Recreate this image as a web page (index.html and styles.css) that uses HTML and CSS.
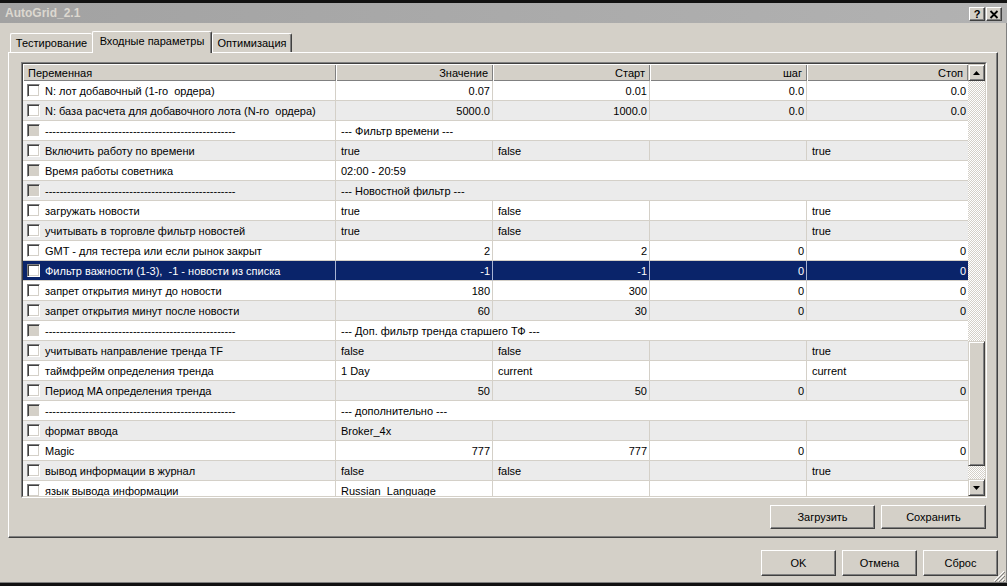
FILE: index.html
```html
<!DOCTYPE html>
<html lang="ru">
<head>
    <meta charset="UTF-8">
    <title>AutoGrid_2.1</title>
    <link rel="stylesheet" href="styles.css">
</head>
<body>

<div class="window">
    <div class="titlebar">
        <span class="title">AutoGrid_2.1</span>
        <div class="title-buttons">
            <span class="tbtn help">?</span>
            <span class="tbtn">
                <svg width="10" height="9" viewBox="0 0 10 9"><path d="M1.5 1 L8.5 8 M8.5 1 L1.5 8" stroke="#000" stroke-width="1.8"/></svg>
            </span>
        </div>
    </div>

    <div class="content">
        <div class="tabs">
            <div class="tab t1">Тестирование</div>
            <div class="tab t2 active">Входные параметры</div>
            <div class="tab t3">Оптимизация</div>
        </div>

        <div class="panel">
            <div class="grid">
                <div class="grid-inner">
                    <div class="grid-body">
                        <table>
                            <colgroup>
                                <col class="c-name"><col class="c-val"><col class="c-val"><col class="c-val"><col class="c-last">
                            </colgroup>
                            <thead>
                                <tr><th class="left">Переменная</th><th>Значение</th><th>Старт</th><th>шаг</th><th>Стоп</th></tr>
                            </thead>
                            <tbody>
                                <tr><td><span class="cb"></span>N: лот добавочный (1-го  ордера)</td><td class="num">0.07</td><td class="num">0.01</td><td class="num">0.0</td><td class="num">0.0</td></tr>
                                <tr><td><span class="cb"></span>N: база расчета для добавочного лота (N-го  ордера)</td><td class="num">5000.0</td><td class="num">1000.0</td><td class="num">0.0</td><td class="num">0.0</td></tr>
                                <tr><td><span class="cb off"></span>----------------------------------------------------</td><td colspan="4">--- Фильтр времени ---</td></tr>
                                <tr><td><span class="cb"></span>Включить работу по времени</td><td>true</td><td>false</td><td></td><td>true</td></tr>
                                <tr><td><span class="cb off"></span>Время работы советника</td><td colspan="4">02:00 - 20:59</td></tr>
                                <tr><td><span class="cb off"></span>----------------------------------------------------</td><td colspan="4">--- Новостной фильтр ---</td></tr>
                                <tr><td><span class="cb"></span>загружать новости</td><td>true</td><td>false</td><td></td><td>true</td></tr>
                                <tr><td><span class="cb"></span>учитывать в торговле фильтр новостей</td><td>true</td><td>false</td><td></td><td>true</td></tr>
                                <tr><td><span class="cb"></span>GMT - для тестера или если рынок закрыт</td><td class="num">2</td><td class="num">2</td><td class="num">0</td><td class="num">0</td></tr>
                                <tr class="sel"><td><span class="cb"></span>Фильтр важности (1-3),  -1 - новости из списка</td><td class="num">-1</td><td class="num">-1</td><td class="num">0</td><td class="num">0</td></tr>
                                <tr><td><span class="cb"></span>запрет открытия минут до новости</td><td class="num">180</td><td class="num">300</td><td class="num">0</td><td class="num">0</td></tr>
                                <tr><td><span class="cb"></span>запрет открытия минут после новости</td><td class="num">60</td><td class="num">30</td><td class="num">0</td><td class="num">0</td></tr>
                                <tr><td><span class="cb off"></span>----------------------------------------------------</td><td colspan="4">--- Доп. фильтр тренда старшего ТФ ---</td></tr>
                                <tr><td><span class="cb"></span>учитывать направление тренда TF</td><td>false</td><td>false</td><td></td><td>true</td></tr>
                                <tr><td><span class="cb"></span>таймфрейм определения тренда</td><td>1 Day</td><td>current</td><td></td><td>current</td></tr>
                                <tr><td><span class="cb"></span>Период MA определения тренда</td><td class="num">50</td><td class="num">50</td><td class="num">0</td><td class="num">0</td></tr>
                                <tr><td><span class="cb off"></span>----------------------------------------------------</td><td colspan="4">--- дополнительно ---</td></tr>
                                <tr><td><span class="cb"></span>формат ввода</td><td>Broker_4x</td><td></td><td></td><td></td></tr>
                                <tr><td><span class="cb"></span>Magic</td><td class="num">777</td><td class="num">777</td><td class="num">0</td><td class="num">0</td></tr>
                                <tr><td><span class="cb"></span>вывод информации в журнал</td><td>false</td><td>false</td><td></td><td>true</td></tr>
                                <tr><td><span class="cb"></span>язык вывода информации</td><td>Russian_Language</td><td></td><td></td><td></td></tr>
                            </tbody>
                        </table>
                    </div>
                    <div class="scrollbar">
                        <div class="sb-btn">
                            <svg width="7" height="4" viewBox="0 0 7 4"><path d="M3.5 0 L7 4 L0 4 Z" fill="#000"/></svg>
                        </div>
                        <div class="sb-track top"></div>
                        <div class="sb-thumb"></div>
                        <div class="sb-track"></div>
                        <div class="sb-btn">
                            <svg width="7" height="4" viewBox="0 0 7 4"><path d="M0 0 L7 0 L3.5 4 Z" fill="#000"/></svg>
                        </div>
                    </div>
                </div>
            </div>

            <div class="panel-buttons">
                <button class="btn wide">Загрузить</button>
                <button class="btn wide">Сохранить</button>
            </div>
        </div>

        <div class="dialog-buttons">
            <button class="btn">OK</button>
            <button class="btn">Отмена</button>
            <button class="btn">Сброс</button>
        </div>
    </div>

    <svg class="grip" width="12" height="12" viewBox="0 0 12 12">
        <path d="M11 1 L1 11 M11 5 L5 11 M11 9 L9 11" stroke="#fff" stroke-width="1"/>
        <path d="M12 2 L2 12 M12 6 L6 12 M12 10 L10 12" stroke="#808080" stroke-width="1"/>
    </svg>
</div>

</body>
</html>
```

FILE: styles.css
```css
* {
    box-sizing: border-box;
}
body {
    margin: 0;
    width: 1007px;
    height: 586px;
    overflow: hidden;
    background: #111;
    font-family: "Liberation Sans", Arial, sans-serif;
    font-size: 11px;
    color: #000;
}
.window {
    position: relative;
    margin-top: 3px;
    height: 580px;
    background: #d4d0c8;
    box-shadow: inset 0 -1px #808080, inset -1px 0 #808080;
}

/* title bar */
.titlebar {
    height: 20px;
    display: flex;
    align-items: center;
    justify-content: space-between;
    padding: 0 5px 0 5px;
    background: linear-gradient(to right, #a2a2a2, #b2b2b2);
}
.title {
    color: #dcd8d0;
    font-weight: bold;
    font-size: 12px;
}
.title-buttons {
    display: flex;
    gap: 0;
    margin-top: 2px;
}
.tbtn {
    width: 16px;
    height: 14px;
    display: flex;
    align-items: center;
    justify-content: center;
    background: #d4d0c8;
    border: 1px solid;
    border-color: #fff #404040 #404040 #fff;
    box-shadow: inset -1px -1px #808080;
    font-weight: bold;
    font-size: 11px;
    line-height: 1;
}
.tbtn.help {
    margin-right: 1px;
}

.content {
    padding: 8px 9px 0 8px;
}

/* tabs */
.tabs {
    display: flex;
    align-items: flex-end;
    height: 21px;
    padding-left: 2px;
}
.tab {
    height: 19px;
    line-height: 18px;
    text-align: center;
    background: #d4d0c8;
    border-top: 1px solid #fff;
    border-left: 1px solid #fff;
    border-right: 1px solid #404040;
    border-radius: 2px 2px 0 0;
    box-shadow: inset -1px 0 #808080;
}
.tab.t1 {
    width: 82px;
    border-right: none;
    box-shadow: none;
}
.tab.t2 {
    width: 120px;
}
.tab.t3 {
    width: 80px;
}
.tab.active {
    position: relative;
    z-index: 1;
    height: 22px;
    margin-bottom: -1px;
    line-height: 19px;
}

/* panel */
.panel {
    height: 486px;
    padding: 9px 0 0 12px;
    border-top: 1px solid #fff;
    border-left: 1px solid #fff;
    border-right: 1px solid #404040;
    border-bottom: 1px solid #404040;
    box-shadow: inset -1px -1px #808080;
}
.grid {
    width: 966px;
    height: 436px;
    border: 1px solid;
    border-color: #808080 #fff #fff #808080;
}
.grid-inner {
    height: 100%;
    display: flex;
    border: 1px solid;
    border-color: #404040 #d4d0c8 #d4d0c8 #404040;
    background: #fff;
}
.grid-body {
    width: 945px;
    overflow: hidden;
}
table {
    width: 945px;
    table-layout: fixed;
    border-collapse: separate;
    border-spacing: 0;
}
col.c-name {
    width: 313px;
}
col.c-val {
    width: 157px;
}
col.c-last {
    width: 161px;
}
th {
    height: 17px;
    padding: 1px 5px 0 4px;
    font-weight: normal;
    text-align: right;
    background: #d4d0c8;
    box-shadow: inset 1px 1px #fff, inset -1px -1px #808080;
    white-space: nowrap;
}
th.left {
    text-align: left;
    padding-left: 5px;
}
td {
    height: 20px;
    line-height: 18px;
    padding: 1px 2px 0 5px;
    border-right: 1px solid #d4d0c8;
    border-bottom: 1px solid #d4d0c8;
    white-space: pre;
    overflow: hidden;
}
td:first-child {
    padding-left: 4px;
}
td:last-child {
    border-right: none;
}
td.num {
    text-align: right;
}
tbody tr:nth-child(even) {
    background: #ebebeb;
}
tr.sel {
    background: #0a246a !important;
    color: #fff;
}
tr.sel td {
    border-right-color: #a8b4d4;
}

/* checkbox */
.cb {
    display: inline-block;
    width: 13px;
    height: 13px;
    margin-right: 5px;
    vertical-align: -2px;
    background: #fff;
    border: 1px solid;
    border-color: #808080 #fff #fff #808080;
    box-shadow: inset 1px 1px #404040, inset -1px -1px #d4d0c8;
}
.cb.off {
    background: #d4d0c8;
}

/* scrollbar */
.scrollbar {
    width: 17px;
    display: flex;
    flex-direction: column;
}
.sb-btn,
.sb-thumb {
    background: #d4d0c8;
    border: 1px solid;
    border-color: #d4d0c8 #404040 #404040 #d4d0c8;
    box-shadow: inset 1px 1px #fff, inset -1px -1px #808080;
}
.sb-btn {
    height: 17px;
    display: flex;
    align-items: center;
    justify-content: center;
}
.sb-track {
    flex: 1;
    background: repeating-conic-gradient(#fff 0 25%, #d4d0c8 0 50%) 0 0 / 2px 2px;
}
.sb-track.top {
    flex: none;
    height: 260px;
}
.sb-thumb {
    height: 125px;
}

/* buttons */
.btn {
    font-family: "Liberation Sans", Arial, sans-serif;
    font-size: 11px;
    color: #000;
    background: #d4d0c8;
    border: 1px solid;
    border-color: #fff #404040 #404040 #fff;
    box-shadow: inset -1px -1px #808080;
    padding: 0;
    width: 75px;
    height: 26px;
}
.btn.wide {
    width: 105px;
    height: 24px;
}
.panel-buttons {
    width: 966px;
    display: flex;
    justify-content: flex-end;
    gap: 6px;
    margin-top: 7px;
    padding-right: 1px;
}
.dialog-buttons {
    display: flex;
    justify-content: flex-end;
    gap: 6px;
    margin-top: 12px;
}
.grip {
    position: absolute;
    right: 2px;
    bottom: 1px;
}
```
